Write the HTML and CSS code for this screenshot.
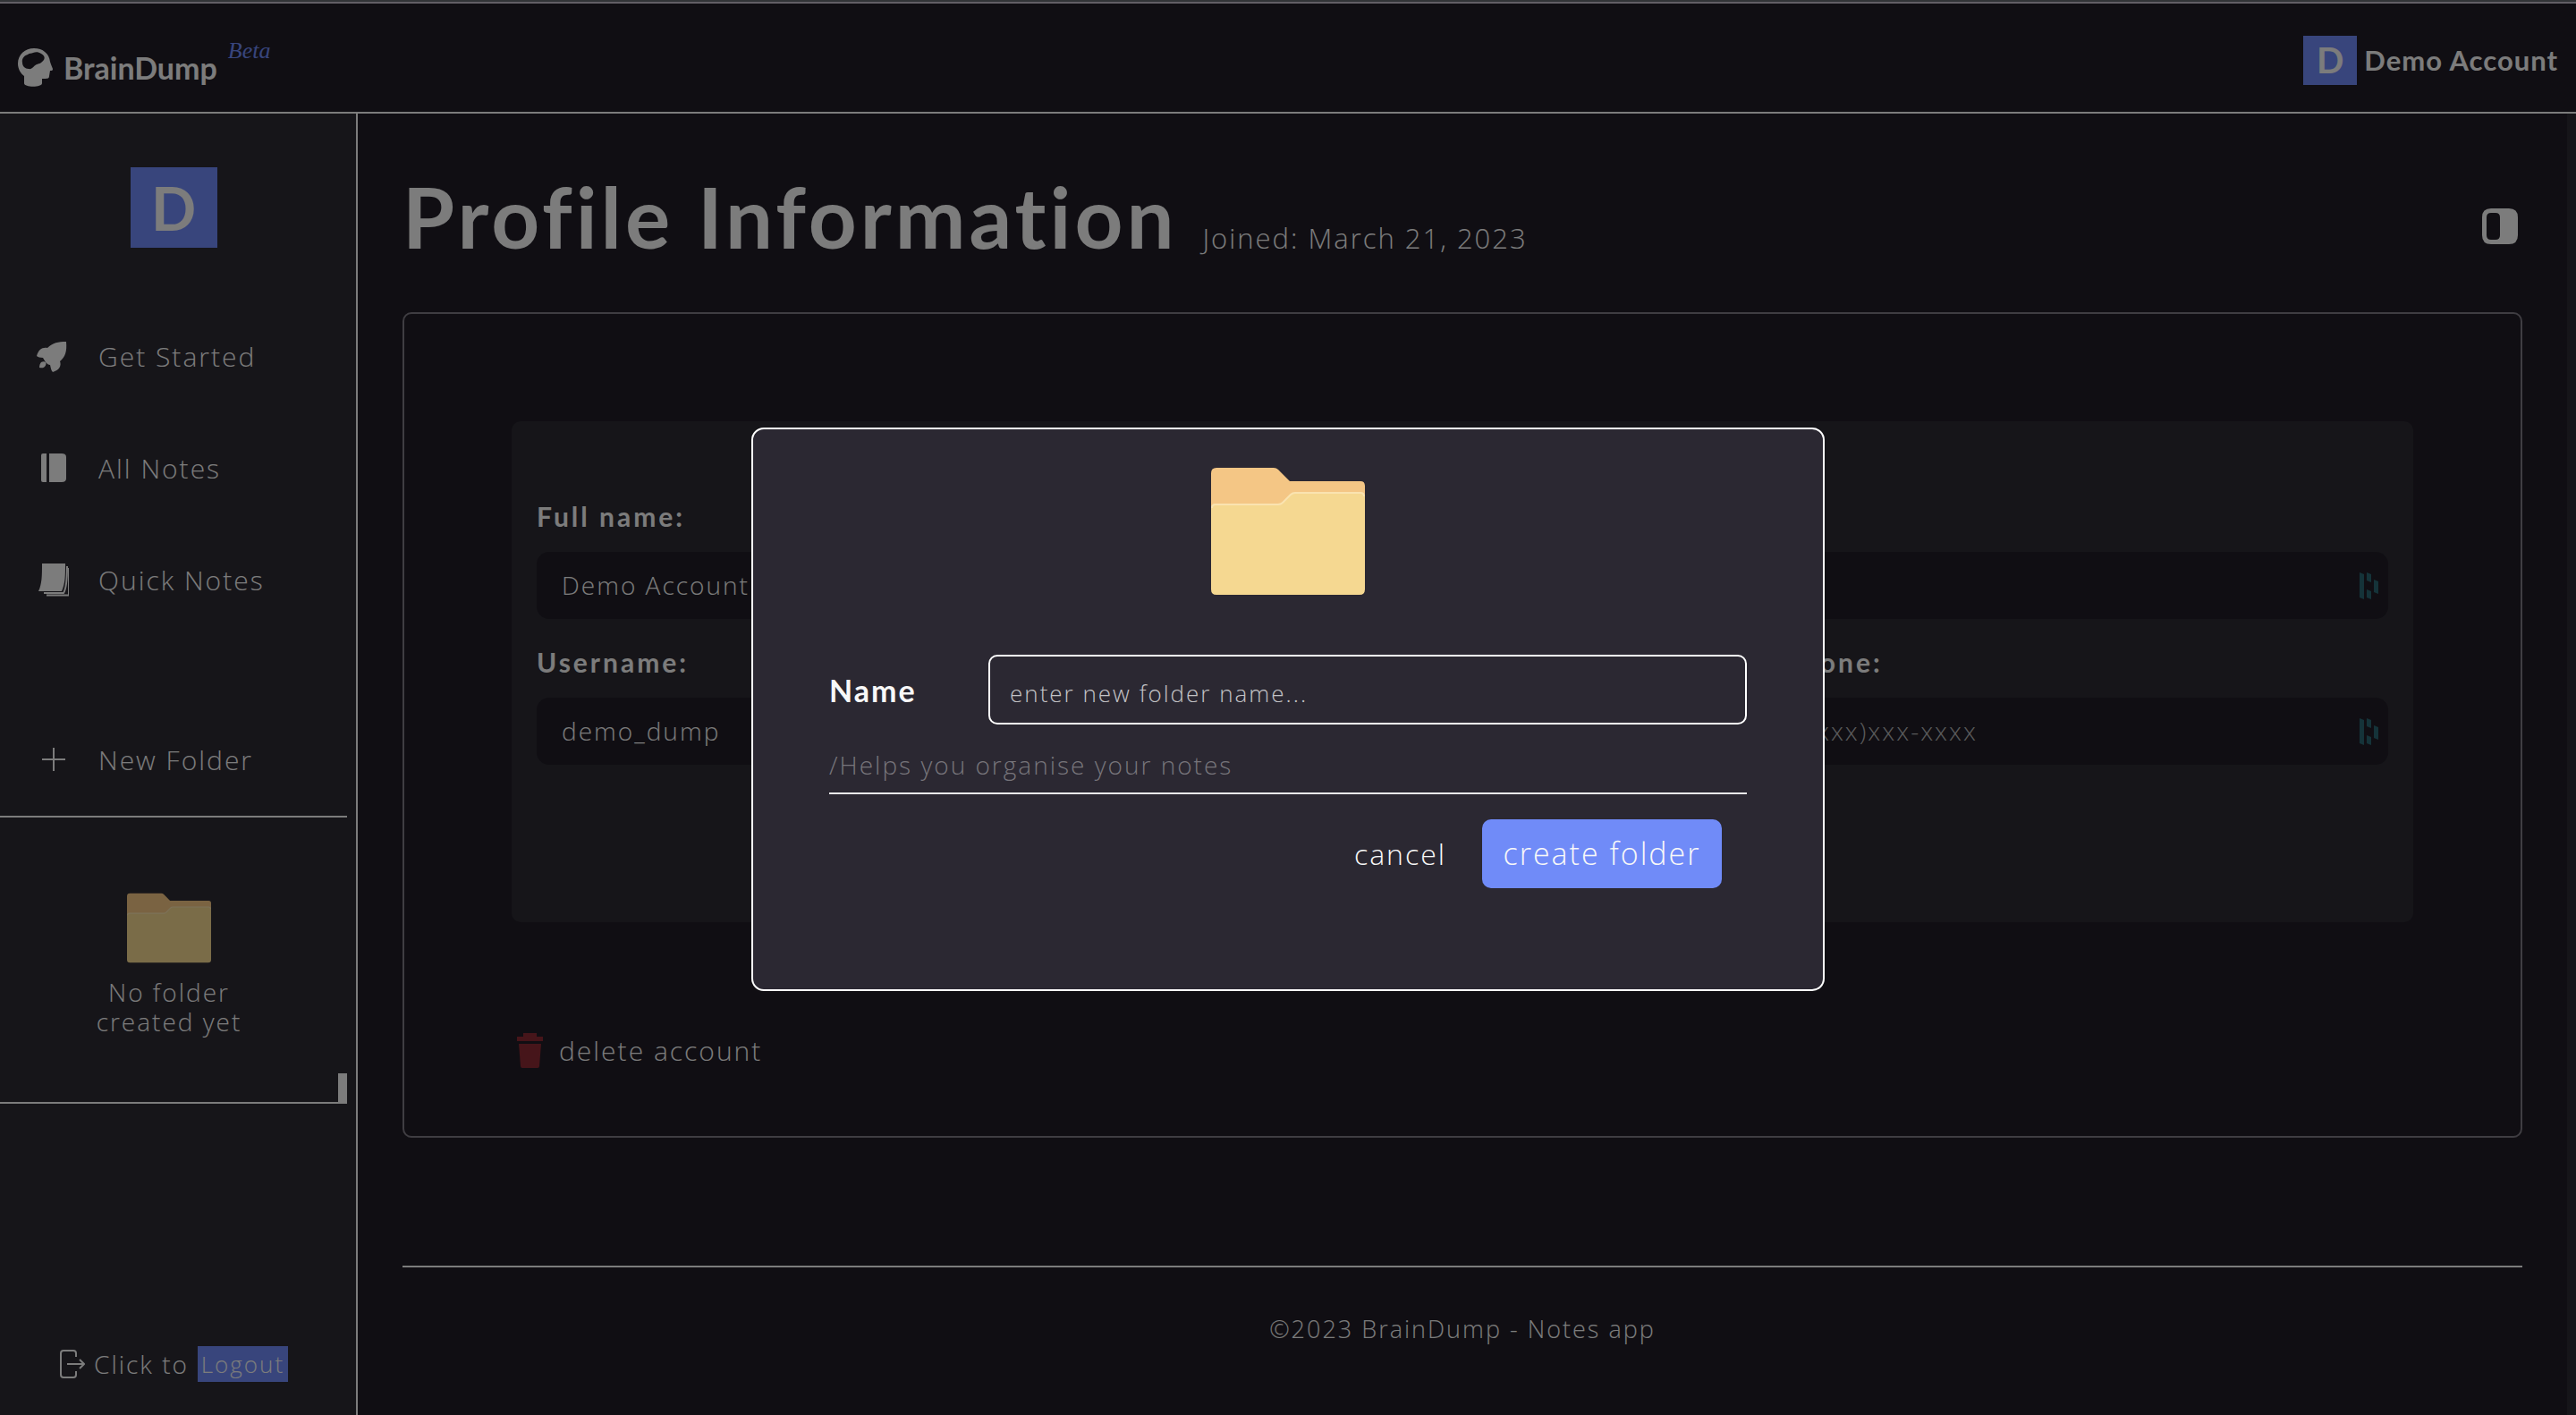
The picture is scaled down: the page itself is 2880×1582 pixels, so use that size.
FILE: index.html
```html
<!DOCTYPE html>
<html lang="en">
<head>
<meta charset="utf-8">
<title>BrainDump - Profile</title>
<link rel="stylesheet" href="styles.css">
</head>
<body>
<svg class="sprite" aria-hidden="true">
  <symbol id="folder" viewBox="0 0 172 142">
    <path fill="#f4c685" d="M6 0h64q3 0 5 2l13 13h79q5 0 5 5v50H0V6q0-6 6-6z"/>
    <path fill="#f5d891" d="M5 40h70q3 0 5-2l8-8q2-2 5-2h74q5 0 5 5v103q0 6-6 6H6q-6 0-6-6V45q0-5 5-5z"/>
    <path fill="none" stroke="#fae3b0" stroke-width="2" d="M1 45q0-4 4-4h70q3 0 5-2l9-9q2-2 5-2h73q4 0 4 4"/>
  </symbol>
  <symbol id="autofill" viewBox="0 0 22 30">
    <path d="M0 0l5 2v28l-5-2zM8 0l5 2v9l-5-2zM8 19l5 2v9l-5-2zM16 8l5 2v14l-5-2z"/>
  </symbol>
</svg>

<header class="topbar">
  <a class="brand" href="#">
    <svg class="brand-icon" viewBox="0 0 39 43" aria-hidden="true">
      <path fill="currentColor" fill-rule="evenodd" d="M18 0c10 0 17 6 18 15l1 3 2 5c0 2-1 2-3 2l-1 6c0 3-2 3-8 3v5c0 5-20 5-20 0v-8C3 28 0 23 0 17 0 7 8 0 18 0zM17 5c-2 1-4 0-6 2-4 1-7 5-6 9 0 4 3 7 7 7 4 1 5-3 9-5 3-1 5-1 8-5 2-4-1-6-3-7-3-2-6-2-9-1z"/>
    </svg>
    <span class="brand-name">BrainDump</span>
    <sup class="brand-tag">Beta</sup>
  </a>
  <a class="account" href="#"><span class="initial initial-small">D</span><span>Demo Account</span></a>
</header>

<div class="layout">
  <aside class="sidebar">
    <span class="initial initial-large">D</span>
    <nav class="menu">
      <a class="menu-item" href="#">
        <svg class="menu-icon" viewBox="0 0 40 40" aria-hidden="true"><path fill="currentColor" d="M37 4c1 11-1 17-7 22 2 5-1 10-8 12-2-2-2-4-3-8-2 0-3-1-5-3-1-2-2-3-3-5-3 0-6-1-7-2 2-7 6-10 12-9C22 5 28 4 37 4zM9 27c3-2 8 0 4 5-2 2-4 1-6 1 0-3 1-5 2-6z"/></svg>
        Get Started</a>
      <a class="menu-item" href="#">
        <svg class="menu-icon" viewBox="0 0 40 40" aria-hidden="true"><path fill="currentColor" d="M11 4h4v32h-4q-2 0-2-2V6q0-2 2-2zM18 4h14q5 0 5 4v24q0 4-5 4H18z"/></svg>
        All Notes</a>
      <a class="menu-item" href="#">
        <svg class="menu-icon" viewBox="0 0 40 40" aria-hidden="true"><path fill="currentColor" d="M10 2h26c0 14 0 22-4 31H6c4-8 4-18 4-31z"/><path fill="none" stroke="currentColor" stroke-width="2" d="M12 35h22c2-3 4-8 4-30M15 37.500h25V7"/></svg>
        Quick Notes</a>
      <button class="menu-item menu-new" type="button">
        <svg class="menu-icon" viewBox="0 0 40 40" aria-hidden="true"><path fill="none" stroke="currentColor" stroke-width="2" d="M10 20h26M23 7v26"/></svg>
        New Folder</button>
    </nav>
    <div class="folders">
      <svg class="folder-small" aria-hidden="true"><use href="#folder"/></svg>
      <p class="folders-empty">No folder<br>created yet</p>
      <span class="folders-thumb"></span>
    </div>
    <div class="logout">
      <svg class="logout-icon" viewBox="0 0 28 32" aria-hidden="true"><path fill="none" stroke="currentColor" stroke-width="2" d="M18 8V4q0-3-3-3H4Q1 1 1 4v24q0 3 3 3h11q3 0 3-3v-4M8 16h19M22 11l5 5-5 5"/></svg>
      <span>Click to</span>
      <button class="logout-button" type="button">Logout</button>
    </div>
  </aside>

  <main class="content">
    <div class="heading">
      <h1 class="title">Profile Information</h1>
      <span class="joined">Joined: March 21, 2023</span>
      <button class="toggle" type="button" aria-label="Toggle panel">
        <svg viewBox="0 0 40 40" aria-hidden="true"><path fill="currentColor" fill-rule="evenodd" d="M10 0h20q10 0 10 10v20q0 10-10 10H10Q0 40 0 30V10Q0 0 10 0zM10 5q-5 0-5 5v20q0 5 5 5h5q5 0 5-5V10q0-5-5-5z"/></svg>
      </button>
    </div>
    <section class="panel">
      <form class="card">
        <div class="row row-two">
          <div class="field">
            <label class="label" for="fullname">Full name:</label>
            <span class="control"><input class="input" id="fullname" type="text" value="Demo Account"></span>
          </div>
          <div class="field">
            <span class="control"><input class="input" type="email" aria-label="Email"><svg class="autofill" aria-hidden="true"><use href="#autofill"/></svg></span>
          </div>
        </div>
        <div class="row row-three">
          <div class="field">
            <label class="label" for="username">Username:</label>
            <span class="control"><input class="input" id="username" type="text" value="demo_dump"></span>
          </div>
          <div class="field field-last">
            <label class="label" for="phone">Phone:</label>
            <span class="control"><input class="input" id="phone" type="tel" placeholder="(xxx)xxx-xxxx"><svg class="autofill" aria-hidden="true"><use href="#autofill"/></svg></span>
          </div>
        </div>
      </form>
      <button class="delete" type="button">
        <svg class="delete-icon" viewBox="0 0 29 39" aria-hidden="true"><path fill="currentColor" d="M7 0h15v4h7v5H0V4h7zM2 12h25l-2 25q0 2-2 2H6q-2 0-2-2z"/></svg>
        delete account</button>
    </section>
    <footer class="footer">©2023 BrainDump - Notes app</footer>
  </main>
</div>

<div class="overlay">
  <form class="dialog" role="dialog" aria-label="New folder">
    <svg class="folder-large" aria-hidden="true"><use href="#folder"/></svg>
    <div class="name-row">
      <label class="name-label" for="folder-name">Name</label>
      <input class="name-input" id="folder-name" type="text" placeholder="enter new folder name...">
    </div>
    <p class="hint">/Helps you organise your notes</p>
    <div class="actions">
      <button class="cancel" type="button">cancel</button>
      <button class="create" type="submit">create folder</button>
    </div>
  </form>
</div>
</body>
</html>
```
FILE: styles.css
```css
:root {
  --bg: #201d26;
  --surface: #2c2a33;
  --text: #f8f8f8;
  --accent: #708bf8;
}

* { box-sizing: border-box; }

body {
  margin: 0;
  min-height: 100vh;
  display: flex;
  flex-direction: column;
  border-top: 2px solid #64686f;
  background: var(--bg);
  color: var(--text);
  font-family: "Open Sans", sans-serif;
  font-size: 30px;
  font-weight: 300;
  line-height: 33px;
  letter-spacing: 2px;
}

button, input { font: inherit; letter-spacing: inherit; color: inherit; }
button { padding: 0; border: 0; background: none; cursor: pointer; }
a { color: inherit; text-decoration: none; }
h1, p { margin: 0; }
svg { display: block; flex: none; }
.sprite { position: absolute; width: 0; height: 0; }

.topbar {
  display: flex;
  justify-content: space-between;
  align-items: center;
  height: 125px;
  padding: 0 20px;
  border-top: 2px solid #c4bcca;
  border-bottom: 2px solid var(--text);
  font-family: Lato, sans-serif;
  font-weight: 700;
}
.brand { display: flex; align-items: center; gap: 12px; padding-top: 22px; font-size: 34px; letter-spacing: 0; }
.brand-icon { width: 39px; height: 43px; }
.brand-tag {
  align-self: flex-start;
  margin-top: -10px;
  color: var(--accent);
  font-family: "Liberation Serif", cursive;
  font-size: 26px;
  font-style: italic;
  font-weight: 400;
  line-height: 26px;
}
.account { display: flex; align-items: center; gap: 8px; padding-top: 6px; font-size: 31px; letter-spacing: 1px; }

.initial {
  display: flex;
  justify-content: center;
  align-items: center;
  background: var(--accent);
  font-family: Lato, sans-serif;
  font-weight: 700;
  letter-spacing: 0;
}
.initial-small { width: 60px; height: 55px; font-size: 40px; }
.initial-large { align-self: center; width: 97px; height: 90px; font-size: 66px; }

.layout { flex: 1; display: flex; }

.sidebar {
  flex: none;
  display: flex;
  flex-direction: column;
  width: 400px;
  padding: 60px 10px 37px 0;
  background: var(--surface);
  border-right: 2px solid var(--text);
}
.menu { display: flex; flex-direction: column; gap: 85px; padding: 101px 0 43px 37px; }
.menu-item { display: flex; align-items: center; gap: 33px; height: 40px; }
.menu-new { margin-top: 76px; }
.menu-icon { width: 40px; height: 40px; }

.folders {
  position: relative;
  display: flex;
  flex-direction: column;
  align-items: center;
  gap: 16px;
  height: 322px;
  padding: 84px 10px 0 0;
  border-top: 2px solid var(--text);
  border-bottom: 2px solid var(--text);
}
.folder-small { width: 94px; height: 79px; }
.folders-empty { text-align: center; font-size: 28px; }
.folders-thumb { position: absolute; right: 0; bottom: 0; width: 10px; height: 32px; background: var(--text); }

.logout { display: flex; align-items: center; gap: 10px; margin-top: auto; padding-left: 67px; font-size: 28px; }
.logout-icon { width: 28px; height: 32px; }
.logout-button { width: 101px; height: 40px; background: var(--accent); font-size: 26px; }

.content {
  flex: 1;
  min-width: 0;
  padding: 64px 50px 0;
  border-right: 10px solid var(--surface);
}
.heading { display: flex; align-items: baseline; gap: 28px; height: 158px; }
.title { font-family: Lato, sans-serif; font-size: 94px; font-weight: 700; line-height: 102px; letter-spacing: 4px; }
.joined { font-size: 31px; }
.toggle { align-self: flex-start; width: 40px; height: 40px; margin: 42px 5px 0 auto; }

.panel { padding: 120px; padding-bottom: 76px; border: 2px solid #7f7a84; border-radius: 10px; }
.card {
  display: flex;
  flex-direction: column;
  gap: 32px;
  min-height: 560px;
  padding: 90px 28px;
  border-radius: 10px;
  background: var(--surface);
}
.row { display: grid; align-items: end; gap: 20px; }
.row-two { grid-template-columns: 1fr 1fr; }
.row-three { grid-template-columns: 1fr 1fr 1fr; }
.field { display: flex; flex-direction: column; gap: 23px; }
.field-last { grid-column: 3; }
.label { font-family: Lato, sans-serif; font-weight: 700; letter-spacing: 3px; }
.control { display: flex; align-items: center; height: 75px; padding: 0 10px 0 28px; border-radius: 14px; background: var(--bg); }
.input { flex: 1; min-width: 0; padding: 0; border: 0; background: none; font-size: 28px; outline: 0; }
.input::placeholder { color: #b4b4b6; opacity: 1; }
.autofill { width: 22px; height: 30px; fill: #2b6673; }

.delete { display: flex; align-items: center; gap: 18px; margin: 124px 0 0 6px; }
.delete-icon { width: 29px; height: 39px; color: #8c2a34; }

.footer { margin-top: 143px; padding-top: 52px; border-top: 2px solid var(--text); font-size: 27px; text-align: center; }

.overlay {
  position: fixed;
  inset: 0;
  display: grid;
  place-items: center;
  padding-top: 4px;
  background: rgba(0, 0, 0, .5);
}
.dialog {
  width: 1200px;
  min-height: 630px;
  padding: 43px 85px;
  border: 2px solid #fff;
  border-radius: 14px;
  background: #2b2832;
}
.folder-large { width: 172px; height: 142px; margin: 0 auto 67px; }
.name-row { display: flex; align-items: center; justify-content: space-between; }
.name-label { font-family: Lato, sans-serif; font-size: 34px; font-weight: 700; }
.name-input { width: 848px; height: 78px; padding: 8px 22px 0; border: 2px solid #fff; border-radius: 10px; background: none; font-size: 26px; outline: 0; }
.name-input::placeholder { color: #c3c3c6; opacity: 1; }
.hint { padding: 29px 0 14px; border-bottom: 2px solid #ececee; color: #77757b; font-size: 28px; }
.actions { display: flex; justify-content: flex-end; align-items: center; gap: 40px; padding: 28px 28px 0 0; }
.cancel { font-size: 32px; }
.create { width: 268px; height: 77px; border-radius: 10px; background: var(--accent); font-size: 34px; }
```
